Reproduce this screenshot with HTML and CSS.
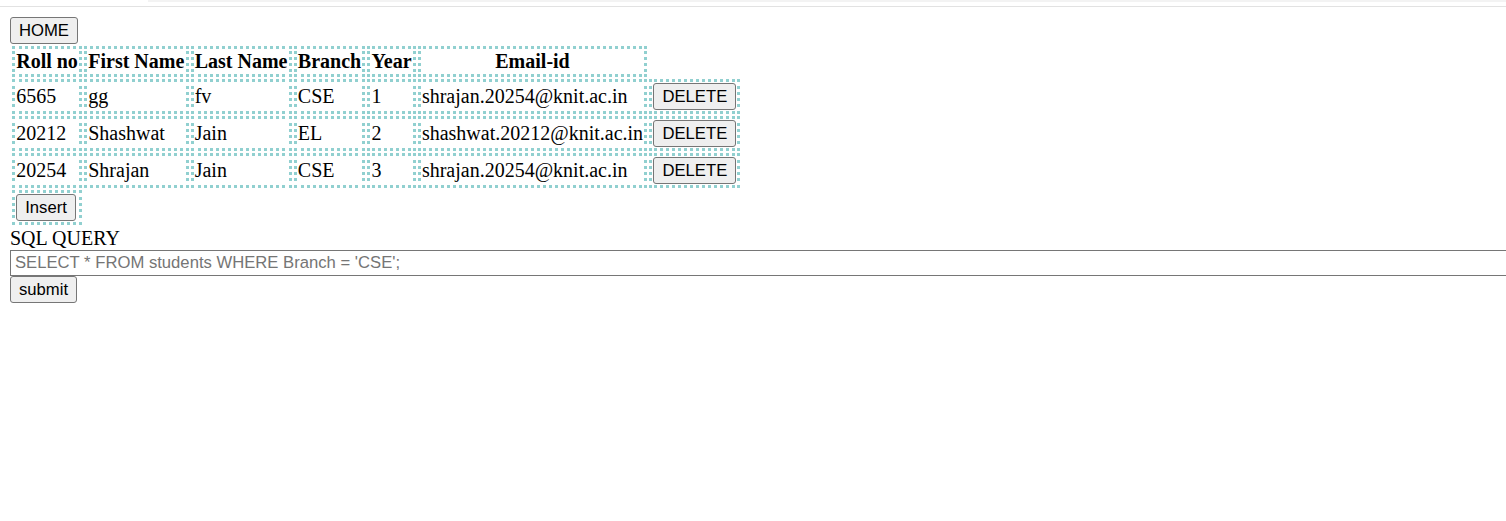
FILE: index.html
```html
<!DOCTYPE html>
<html>
<head>
<meta charset="utf-8">
<title>Students</title>
<link rel="stylesheet" href="styles.css">
</head>
<body>
<div class="topbar"><div class="topbar-tab"></div></div>
<main class="page">
  <button class="btn">HOME</button>
  <table class="students">
    <tr>
      <th>Roll no</th><th>First Name</th><th>Last Name</th><th>Branch</th><th>Year</th><th>Email-id</th>
    </tr>
    <tr>
      <td>6565</td><td>gg</td><td>fv</td><td>CSE</td><td>1</td><td>shrajan.20254@knit.ac.in</td><td><button class="btn">DELETE</button></td>
    </tr>
    <tr>
      <td>20212</td><td>Shashwat</td><td>Jain</td><td>EL</td><td>2</td><td>shashwat.20212@knit.ac.in</td><td><button class="btn">DELETE</button></td>
    </tr>
    <tr>
      <td>20254</td><td>Shrajan</td><td>Jain</td><td>CSE</td><td>3</td><td>shrajan.20254@knit.ac.in</td><td><button class="btn">DELETE</button></td>
    </tr>
    <tr>
      <td><button class="btn">Insert</button></td>
    </tr>
  </table>
  <form class="query">
    <label class="query-label" for="q">SQL QUERY</label>
    <input id="q" class="query-input" type="text" placeholder="SELECT * FROM students WHERE Branch = 'CSE';">
    <button class="btn" type="button">submit</button>
  </form>
</main>
</body>
</html>
```

FILE: styles.css
```css
html, body {
  margin: 0;
  padding: 0;
  overflow: hidden;
  background: #fff;
}
body {
  font-family: "Liberation Serif", "Times New Roman", serif;
  font-size: 20px;
  color: #000;
}
.topbar {
  height: 6px;
  border-bottom: 1px solid #e2e2e2;
}
.topbar-tab {
  margin-left: 148px;
  height: 2px;
  background: #f3f3f3;
}
.page {
  padding: 10px 10px 0 10px;
}
.btn {
  font-family: "Liberation Sans", Arial, sans-serif;
  font-size: 16.67px;
  line-height: 19px;
  padding: 3px 8px;
  border: 1px solid #767676;
  border-radius: 3px;
  background: #efefef;
  color: #000;
  margin: 0;
}
.students {
  border-collapse: separate;
  border-spacing: 2px;
  margin-top: 0;
}
.students th,
.students td {
  border: 3px dotted #91d0d0;
  padding: 1px 1.2px;
  line-height: 23px;
  white-space: nowrap;
}
.students th {
  font-weight: bold;
}
.students td {
  text-align: left;
}
.query {
  margin: 0;
}
.query-label {
  display: block;
  line-height: 23px;
}
.query-input {
  display: block;
  width: calc(100% + 20px);
  height: 26px;
  box-sizing: border-box;
  margin: 0;
  padding: 1px 4px;
  border: 1px solid #767676;
  font-family: "Liberation Sans", Arial, sans-serif;
  font-size: 16.67px;
}
.query-input::placeholder {
  color: #757575;
}
```
